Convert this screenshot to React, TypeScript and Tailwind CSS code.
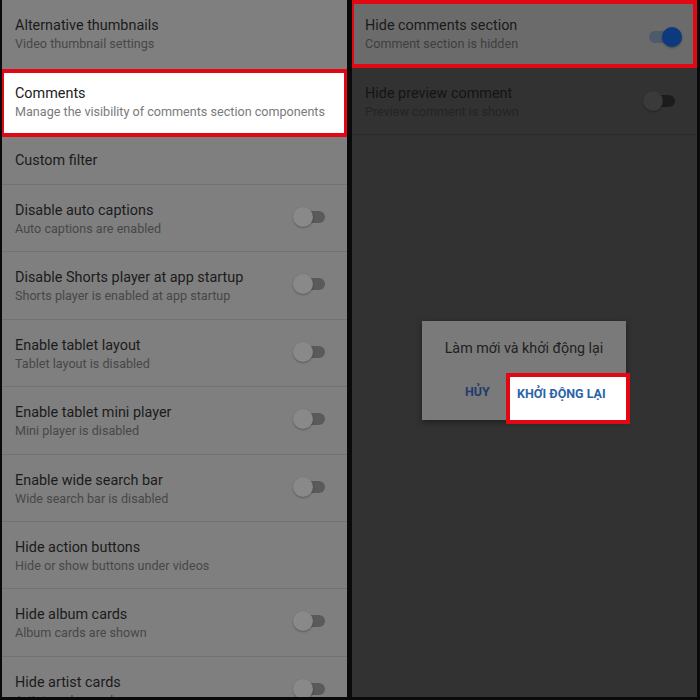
import React from "react";

type Row = { title: string; sub?: string; toggle?: boolean };

const leftRows: Row[] = [
  { title: "Disable auto captions", sub: "Auto captions are enabled", toggle: true },
  { title: "Disable Shorts player at app startup", sub: "Shorts player is enabled at app startup", toggle: true },
  { title: "Enable tablet layout", sub: "Tablet layout is disabled", toggle: true },
  { title: "Enable tablet mini player", sub: "Mini player is disabled", toggle: true },
  { title: "Enable wide search bar", sub: "Wide search bar is disabled", toggle: true },
  { title: "Hide action buttons", sub: "Hide or show buttons under videos" },
  { title: "Hide album cards", sub: "Album cards are shown", toggle: true },
  { title: "Hide artist cards", sub: "Artist cards are shown", toggle: true },
];

function OffToggle({ dark }: { dark?: boolean }) {
  return (
    <div className="relative h-[20px] w-[34px] shrink-0">
      <div
        className={`absolute left-[4px] top-[4px] h-[12px] w-[28px] rounded-full ${
          dark ? "bg-[#1c1c1c]" : "bg-[#5a5a5a]"
        }`}
      />
      <div
        className={`absolute left-0 top-0 h-[20px] w-[20px] rounded-full shadow-[0_1px_2px_rgba(0,0,0,0.3)] ${
          dark ? "bg-[#3a3a3a]" : "bg-[#898989]"
        }`}
      />
    </div>
  );
}

function OnToggle() {
  return (
    <div className="relative h-[20px] w-[34px] shrink-0">
      <div className="absolute left-[1px] top-[4px] h-[12px] w-[28px] rounded-full bg-[#4d5a6b]" />
      <div className="absolute right-0 top-0 h-[20px] w-[20px] rounded-full bg-[#0d3a7e] shadow-[0_1px_2px_rgba(0,0,0,0.35)]" />
    </div>
  );
}

export default function App() {
  return (
    <div
      className="flex h-[700px] w-[700px] gap-[5px] overflow-hidden bg-[#0a0a0a] pl-[2px]"
      style={{ fontFamily: "Roboto, 'Noto Sans', sans-serif" }}
    >
      {/* left: settings list, dimmed */}
      <div className="flex h-[697px] w-[345px] flex-col overflow-hidden bg-[#7f7f7f]">
        <div className="h-[69px] shrink-0 pl-[13px] pt-[16px]">
          <div className="text-[14.4px] leading-[19px] text-[#1b1b1b]">Alternative thumbnails</div>
          <div className="text-[12.6px] leading-[18px] text-[#474747]">Video thumbnail settings</div>
        </div>

        <div className="-ml-[2px] h-[68px] w-[348px] shrink-0 border-[4px] border-[#e30613] bg-white pl-[11px] pt-[11px]">
          <div className="text-[14.4px] leading-[19px] text-[#212121]">Comments</div>
          <div className="text-[12.6px] leading-[18px] text-[#7a7a7a]">
            Manage the visibility of comments section components
          </div>
        </div>

        <div className="flex h-[48px] shrink-0 items-center border-b border-[#727272] pl-[13px] pt-[1px]">
          <div className="text-[14.4px] leading-[20px] text-[#1b1b1b]">Custom filter</div>
        </div>

        {leftRows.map((r) => (
          <div
            key={r.title}
            className="flex h-[67.4px] shrink-0 items-start justify-between border-b border-[#727272] pl-[13px] pr-[20px] pt-[16px]"
          >
            <div>
              <div className="text-[14.4px] leading-[19px] text-[#1b1b1b]">{r.title}</div>
              <div className="text-[12.6px] leading-[18px] text-[#474747]">{r.sub}</div>
            </div>
            {r.toggle && (
              <div className="pt-[6px]">
                <OffToggle />
              </div>
            )}
          </div>
        ))}
      </div>

      {/* right: comments screen with restart dialog */}
      <div className="relative h-[697px] w-[345px] overflow-hidden bg-[#323232]">
        <div className="-ml-[2px] flex h-[68px] w-[347px] items-start justify-between border-[4px] border-[#e30613] bg-[#6b6b6b] pl-[11px] pr-[11px] pt-[12px]">
          <div>
            <div className="text-[14.4px] leading-[19px] text-[#1a1a1a]">Hide comments section</div>
            <div className="text-[12.6px] leading-[18px] text-[#3e3e3e]">Comment section is hidden</div>
          </div>
          <div className="pt-[11px]">
            <OnToggle />
          </div>
        </div>

        <div className="flex h-[67px] items-start justify-between border-b border-[#2a2a2a] pl-[13px] pr-[20px] pt-[16px]">
          <div>
            <div className="text-[14.4px] leading-[19px] text-[#141414]">Hide preview comment</div>
            <div className="text-[12.6px] leading-[18px] text-[#242424]">Preview comment is shown</div>
          </div>
          <div className="pt-[7px]">
            <OffToggle dark />
          </div>
        </div>

        <div className="absolute left-[70px] top-[321px] h-[99px] w-[204px] bg-[#7a7a7a] shadow-[0_2px_6px_rgba(0,0,0,0.4)]">
          <div className="pt-[17px] text-center text-[14.3px] leading-[20px] text-[#1f1f1f]">
            Làm mới và khởi động lại
          </div>
          <div className="absolute left-[43px] top-[63px] text-[12.5px] font-bold leading-[16px] text-[#1f3c6d]">
            HỦY
          </div>
          <div className="absolute left-[84px] top-[52px] flex h-[51px] w-[124px] items-start border-[4px] border-[#e30613] bg-white pl-[7px] pt-[9px]">
            <span className="text-[12.5px] font-bold leading-[16px] text-[#2a63a8]">KHỞI ĐỘNG LẠI</span>
          </div>
        </div>
      </div>
    </div>
  );
}
